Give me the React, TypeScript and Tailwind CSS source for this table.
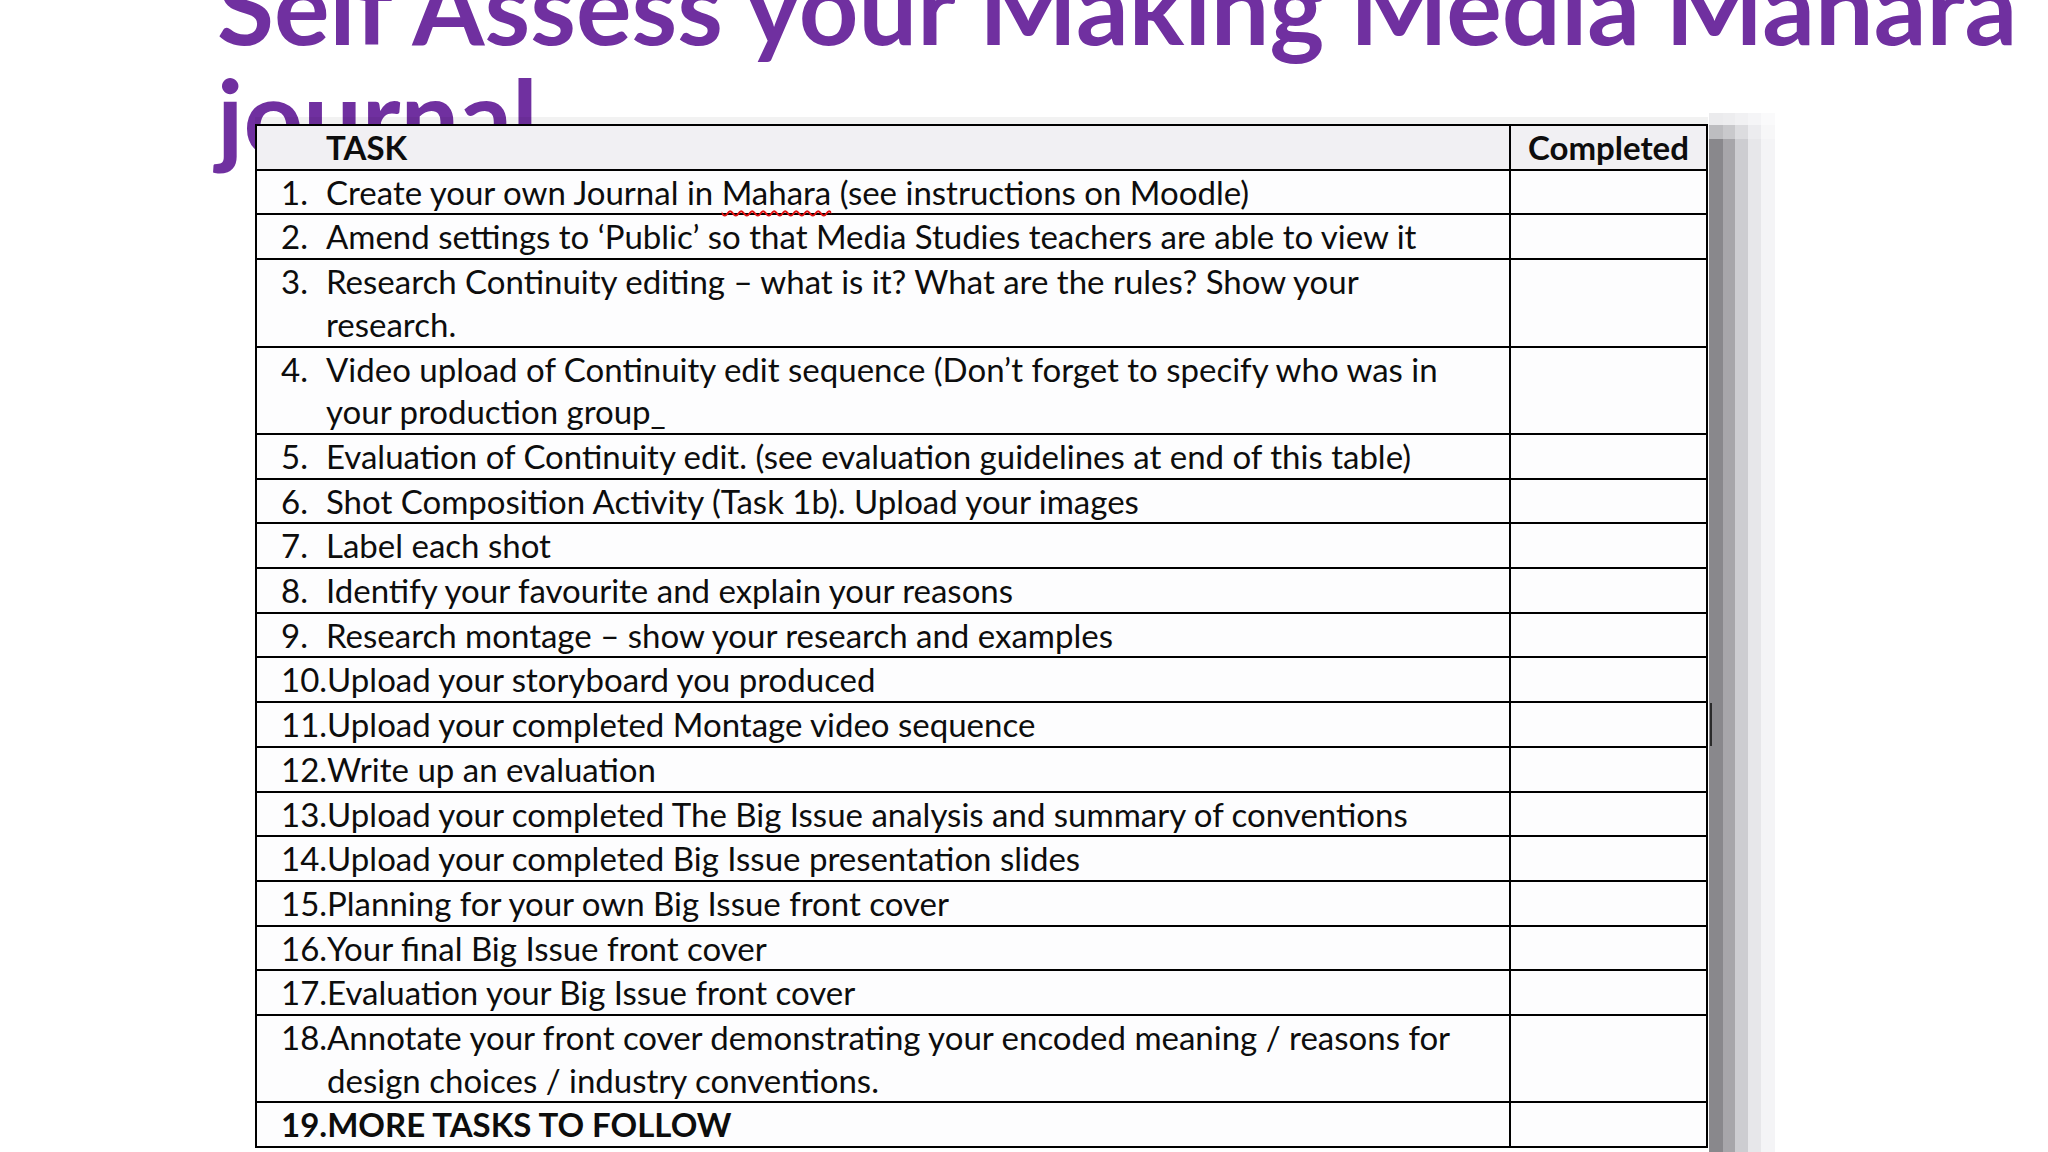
import React from "react";

interface Task {
  n: number;
  lines: React.ReactNode[];
  bold?: boolean;
  mark?: boolean;
}

const tasks: Task[] = [
  {
    n: 1,
    lines: [
      <>
        Create your own Journal in{" "}
        <span className="underline decoration-wavy decoration-[#e01010] decoration-2 underline-offset-[5px]">
          Mahara
        </span>{" "}
        (see instructions on Moodle)
      </>,
    ],
  },
  { n: 2, lines: ["Amend settings to ‘Public’ so that Media Studies teachers are able to view it"] },
  {
    n: 3,
    lines: ["Research Continuity editing – what is it? What are the rules? Show your", "research."],
  },
  {
    n: 4,
    lines: [
      "Video upload of Continuity edit sequence (Don’t forget to specify who was in",
      "your production group_",
    ],
  },
  { n: 5, lines: ["Evaluation of Continuity edit. (see evaluation guidelines at end of this table)"] },
  { n: 6, lines: ["Shot Composition Activity (Task 1b). Upload your images"] },
  { n: 7, lines: ["Label each shot"] },
  { n: 8, lines: ["Identify your favourite and explain your reasons"] },
  { n: 9, lines: ["Research montage – show your research and examples"] },
  { n: 10, lines: ["Upload your storyboard you produced"] },
  { n: 11, lines: ["Upload your completed Montage video sequence"], mark: true },
  { n: 12, lines: ["Write up an evaluation"] },
  { n: 13, lines: ["Upload your completed The Big Issue analysis and summary of conventions"] },
  { n: 14, lines: ["Upload your completed Big Issue presentation slides"] },
  { n: 15, lines: ["Planning for your own Big Issue front cover"] },
  { n: 16, lines: ["Your final Big Issue front cover"] },
  { n: 17, lines: ["Evaluation your Big Issue front cover"] },
  {
    n: 18,
    lines: [
      "Annotate your front cover demonstrating your encoded meaning / reasons for",
      "design choices / industry conventions.",
    ],
  },
  { n: 19, lines: ["MORE TASKS TO FOLLOW"], bold: true },
];

function Shadow() {
  return (
    <div className="flex flex-col w-[66px] -mt-[11px] ml-[1px]">
      <div className="flex h-[12px] shrink-0">
        <div className="w-[14px] bg-[#ebebed]" />
        <div className="w-[12px] bg-[#ededef]" />
        <div className="w-[13px] bg-[#f1f1f3]" />
        <div className="w-[13px] bg-[#f5f5f7]" />
        <div className="w-[14px] bg-[#fafafb]" />
      </div>
      <div className="flex h-[14px] shrink-0">
        <div className="w-[14px] bg-[#bdbdc0]" />
        <div className="w-[12px] bg-[#c9c9cc]" />
        <div className="w-[13px] bg-[#dcdcdf]" />
        <div className="w-[13px] bg-[#ececef]" />
        <div className="w-[14px] bg-[#f7f7f8]" />
      </div>
      <div className="flex flex-1">
        <div className="w-[14px] bg-[#89888c]" />
        <div className="w-[12px] bg-[#a7a6aa]" />
        <div className="w-[13px] bg-[#cdcdd1]" />
        <div className="w-[13px] bg-[#e7e7ea]" />
        <div className="w-[14px] bg-[#f4f4f6]" />
      </div>
    </div>
  );
}

export default function App() {
  return (
    <div
      className="w-[2048px] h-[1152px] overflow-hidden bg-white text-[#0d0d0d]"
      style={{ fontFamily: "Lato, 'Open Sans', sans-serif" }}
    >
      <h1 className="-mt-[50px] h-[174px] pl-[217px] text-[#7030a0] font-bold text-[104px] leading-[110px] whitespace-nowrap">
        Self Assess your Making Media Mahara
        <br />
        journal
      </h1>

      <div className="flex items-stretch pl-[255px] h-[1028px]">
        <div className="flex flex-col">
          <div className="-mt-[7px] h-[7px] shrink-0 bg-black/5 relative z-10" />
          <div className="relative z-10 shrink-0 w-[1453px] border-2 border-black bg-[#fdfdfe] text-[33px] leading-[42.7px]">
            <div className="flex border-b-2 border-black bg-[#f1f0f3] font-bold">
              <div className="flex-1 pl-[69px]">TASK</div>
              <div className="w-[197px] border-l-2 border-black text-center">Completed</div>
            </div>
            {tasks.map((t, i) => (
              <div
                key={t.n}
                className={`flex ${i < tasks.length - 1 ? "border-b-2 border-black" : ""} ${
                  t.bold ? "font-bold" : ""
                }`}
              >
                <div className="flex-1 flex pl-[24px] whitespace-nowrap">
                  <span className="min-w-[45px] shrink-0">{t.n}.</span>
                  <div className="flex flex-col">
                    {t.lines.map((l, j) => (
                      <span key={j}>{l}</span>
                    ))}
                  </div>
                </div>
                <div className="relative w-[197px] border-l-2 border-black">
                  {t.mark && (
                    <div className="absolute -right-[6px] top-0 bottom-0 w-[2px] bg-[#2a2a2a]" />
                  )}
                </div>
              </div>
            ))}
          </div>
        </div>
        <Shadow />
      </div>
    </div>
  );
}
